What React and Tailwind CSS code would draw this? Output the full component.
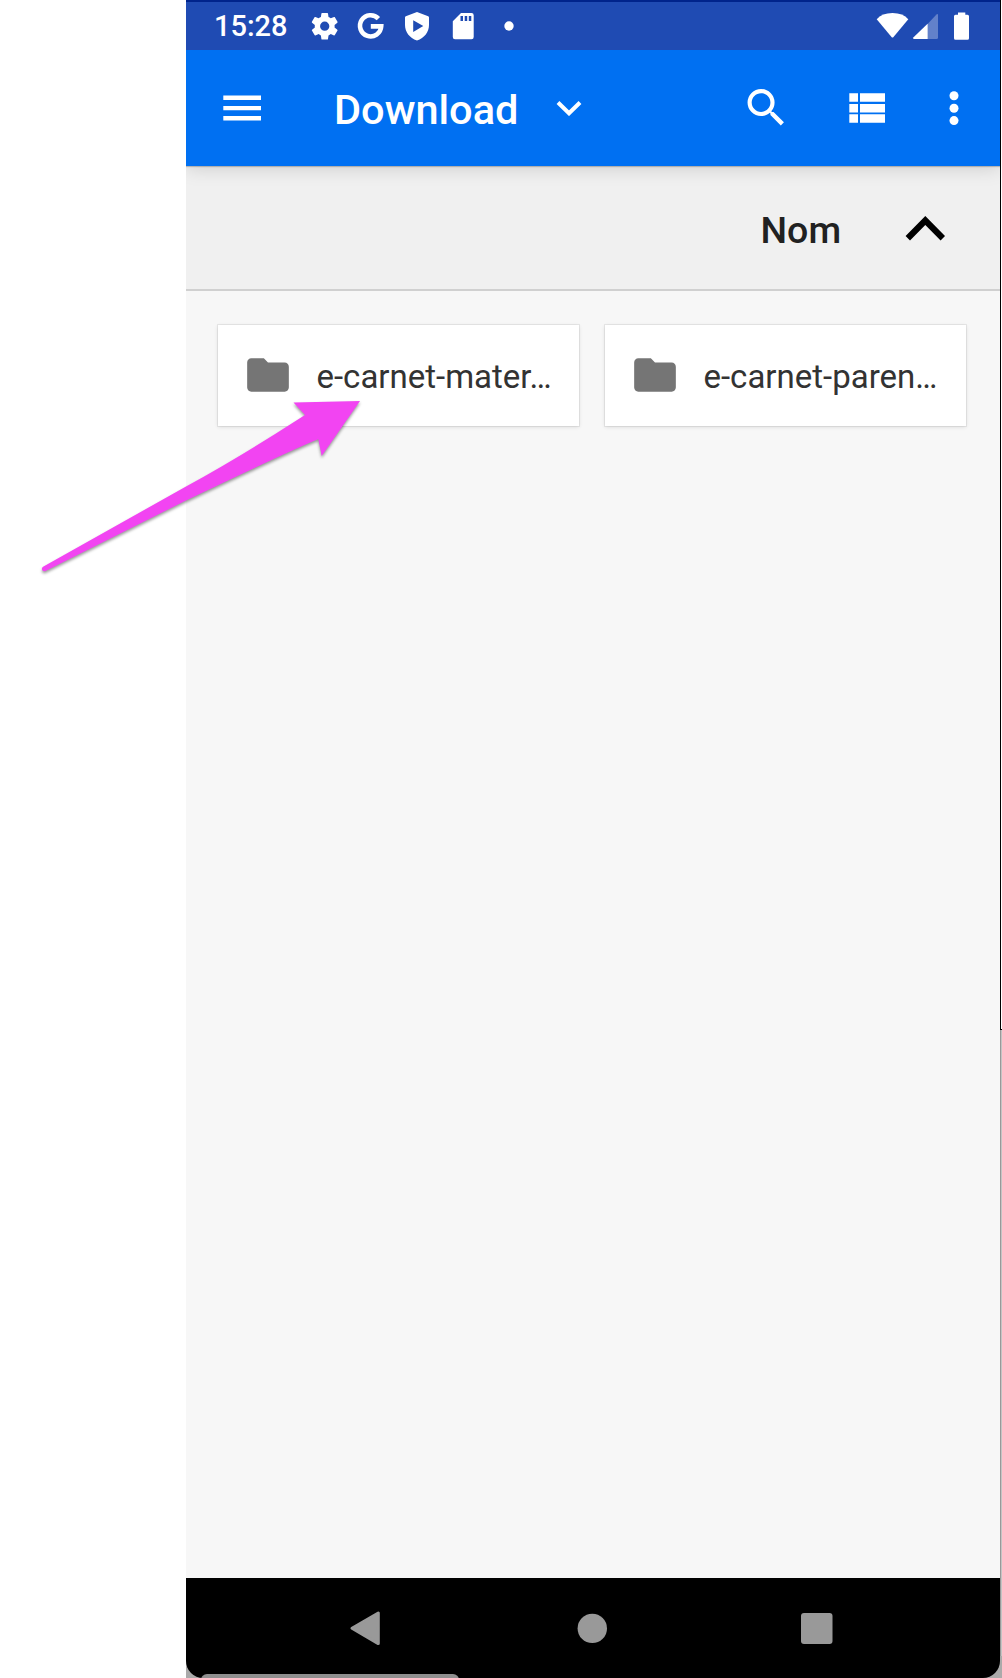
const cards = ["e-carnet-mater…", "e-carnet-paren…"];

function StatusBar() {
  return (
    <div className="relative z-20 flex h-[50px] items-center border-t-2 border-[#00248c] bg-[#1f4bb3] pl-[28px] text-white">
      <span className="w-[93px] text-[29px] leading-[48px] font-medium">15:28</span>
      <svg className="-mt-0.5 block h-[48px] w-[220px]" viewBox="307 0 220 48" fill="currentColor">
        <path
          transform="translate(308.8 9.3) scale(1.325)"
          d="M19.43 12.98c.04-.32.07-.64.07-.98s-.03-.66-.07-.98l2.11-1.65c.19-.15.24-.42.12-.64l-2-3.46c-.12-.22-.39-.3-.61-.22l-2.49 1c-.52-.4-1.08-.73-1.69-.98l-.38-2.65A.49.49 0 0 0 14 2h-4c-.25 0-.46.18-.49.42l-.38 2.65c-.61.25-1.17.59-1.69.98l-2.49-1c-.23-.09-.49 0-.61.22l-2 3.46c-.13.22-.07.49.12.64l2.11 1.65c-.04.32-.07.65-.07.98s.03.66.07.98l-2.11 1.65c-.19.15-.24.42-.12.64l2 3.46c.12.22.39.3.61.22l2.49-1c.52.4 1.08.73 1.69.98l.38 2.65c.03.24.24.42.49.42h4c.25 0 .46-.18.49-.42l.38-2.65c.61-.25 1.17-.59 1.69-.98l2.49 1c.23.09.49 0 .61-.22l2-3.46c.12-.22.07-.49-.12-.64l-2.11-1.65zM12 15.5a3.5 3.5 0 1 1 0-7 3.5 3.5 0 0 1 0 7z"
        />
        <path d="M378.400 17.600A10.600 10.600 0 1 0 381.200 25.400H370.800" fill="none" stroke="currentColor" strokeWidth="4.600" />
        <path
          fillRule="evenodd"
          d="M417 11 428.200 15.200Q429 15.600 429 16.500V24C429 31 424.500 37 417 39.500 409.500 37 405 31 405 24V16.500Q405 15.600 405.800 15.200ZM413.200 19.300V31L423.300 25.100Z"
        />
        <path
          fillRule="evenodd"
          d="M461 12H471.500Q473.700 12 473.700 14.200V36Q473.700 38.200 471.500 38.200H455Q452.800 38.200 452.800 36V20.200ZM460.500 15V20H463V15ZM464.700 15V20H467.200V15ZM468.800 15V20H471.300V15Z"
        />
        <circle cx="509" cy="25" r="4.700" />
      </svg>
      <svg className="-mt-0.5 mr-[28px] ml-auto block h-[48px] w-[98px]" viewBox="874 0 98 48" fill="currentColor">
        <path d="M876.700 18.300Q882 12 892.500 12T908.300 18.300L893.500 36Q892.500 37 891.500 36Z" />
        <path d="M913.500 38 936.500 13.500Q938 12.500 938 14V36.500Q938 38 936.500 38Z" opacity=".3" />
        <path d="M927.600 22.800V38H914Q912.500 37.500 913.300 36.500Z" />
        <path d="M958 11.500H965.300V13.800H967.500Q969 13.800 969 15.300V37.200Q969 38.700 967.500 38.700H955.500Q954 38.700 954 37.200V15.300Q954 13.800 955.500 13.800H958Z" />
      </svg>
    </div>
  );
}

function AppBar() {
  return (
    <header className="relative z-10 flex h-[116px] items-center bg-[#0070f2] text-white shadow-[0_2px_18px_rgba(0,0,0,0.15),0_1px_1px_rgba(0,0,0,0.2)]">
      <svg className="ml-[37px] block h-[26px] w-[38px]" viewBox="0 0 38 26" fill="currentColor">
        <path d="M.3.500H38V5H.3ZM.3 10.900H38V15.200H.3ZM.3 21.100H38V25.600H.3Z" />
      </svg>
      <span className="ml-[73px] w-[222px] pt-[3px] text-[41.5px] font-medium leading-[48px]">Download</span>
      <svg className="block h-[16px] w-[26px]" viewBox="0 0 26 16" fill="none" stroke="currentColor" strokeWidth="4">
        <path d="M2 2.500 13 13.300 24 2.500" />
      </svg>
      <svg className="ml-auto mr-[23px] block h-[50px] w-[236px]" viewBox="741 83 236 50" fill="currentColor">
        <path
          transform="translate(741.300 82.800) scale(2.080)"
          d="M15.500 14h-.79l-.28-.27A6.471 6.471 0 0 0 16 9.500 6.500 6.500 0 1 0 9.500 16c1.610 0 3.090-.59 4.230-1.570l.27.28v.79l5 4.990L20.490 19l-4.990-5zm-6 0C7.010 14 5 11.990 5 9.500S7.010 5 9.500 5 14 7.010 14 9.500 11.990 14 9.500 14z"
        />
        <path d="M849.300 93.300H858V101.800H849.300ZM860 93.300H885V101.800H860ZM849.300 104H858V112.500H849.300ZM860 104H885V112.500H860ZM849.300 114.300H858V122.800H849.300ZM860 114.300H885V122.800H860Z" />
        <circle cx="954" cy="95.700" r="4.500" />
        <circle cx="954" cy="108.200" r="4.500" />
        <circle cx="954" cy="120.600" r="4.500" />
      </svg>
    </header>
  );
}

function SortBar() {
  return (
    <div className="flex h-[125px] items-center justify-end border-b-2 border-[#d0d0d0] bg-[#f0f0f0] pr-[54px]">
      <span className="w-[143.5px] pt-1 text-[37.5px] font-medium leading-[44px] text-[#212121]">Nom</span>
      <svg className="block h-[26px] w-[42px]" viewBox="904 215 42 26" fill="none" stroke="#000" strokeWidth="6.200">
        <path d="M907.800 238.200 925.300 220.500 942.800 238.200" />
      </svg>
    </div>
  );
}

function FolderCard({ name }) {
  return (
    <div className="flex h-[101px] items-center bg-white pl-[25px] shadow-[0_0_0_1px_rgba(0,0,0,0.06),0_1px_4px_rgba(0,0,0,0.12)]">
      <svg className="mb-0.5 block size-[50px]" viewBox="0 0 24 24" fill="#757575">
        <path d="M10 4H4c-1.100 0-2 .9-2 2v12c0 1.100.9 2 2 2h16c1.100 0 2-.9 2-2V8c0-1.100-.9-2-2-2h-8l-2-2z" />
      </svg>
      <span className="ml-[23.5px] whitespace-nowrap pt-[3px] text-[33px] leading-[40px] text-[#333]">{name}</span>
    </div>
  );
}

function NavBar() {
  return (
    <div className="h-[100px] bg-[#aaa]">
      <nav className="relative flex h-[100px] items-center overflow-hidden rounded-b-[17px] bg-black">
        <svg className="block h-[100px] w-full" viewBox="186 1578 814 100" fill="#999">
          <path d="M352 1628.300 378.300 1613V1643.600Z" stroke="#999" strokeWidth="3" strokeLinejoin="round" />
          <circle cx="592.300" cy="1628.400" r="14.700" />
          <rect x="801" y="1613" width="31.500" height="31" rx="3" />
        </svg>
        <div className="absolute -bottom-1 left-[15px] h-2 w-[258px] rounded-t-[6px] bg-[#8f8f8f]" />
      </nav>
    </div>
  );
}

function Arrow() {
  return (
    <svg className="absolute top-[390px] left-[30px] z-20 h-[195px] w-[345px] drop-shadow-[0_2px_1.5px_rgba(0,0,0,0.4)]" viewBox="30 390 345 195" fill="#f244f2">
      <path d="M360 401 321.700 456 318.300 439.300Q300 446 186 500.500L45.500 571Q42.500 572 42 569.500 41.500 567.500 43.500 566.500L186 486.500Q240 457 305 415L293.500 402.500Z" />
    </svg>
  );
}

export default function App() {
  return (
    <div className="relative flex h-[1678px] w-[1002px] overflow-hidden bg-white pl-[186px] font-[Roboto,sans-serif]">
      <main className="flex w-[814px] flex-col overflow-hidden bg-[#f7f7f7]">
        <StatusBar />
        <AppBar />
        <SortBar />
        <section className="grid flex-1 grid-cols-2 content-start gap-[26px] pt-[34px] pr-[34px] pl-[32px]">
          {cards.map((name) => (
            <FolderCard key={name} name={name} />
          ))}
        </section>
        <NavBar />
      </main>
      <aside className="flex w-[2px] flex-col">
        <div className="h-[1030px] border-b border-l border-black bg-white" />
        <div className="h-[626px] border-l border-[#999] bg-[#c4c4c4]" />
        <div className="flex-1 bg-[#aaa]" />
      </aside>
      <Arrow />
    </div>
  );
}
